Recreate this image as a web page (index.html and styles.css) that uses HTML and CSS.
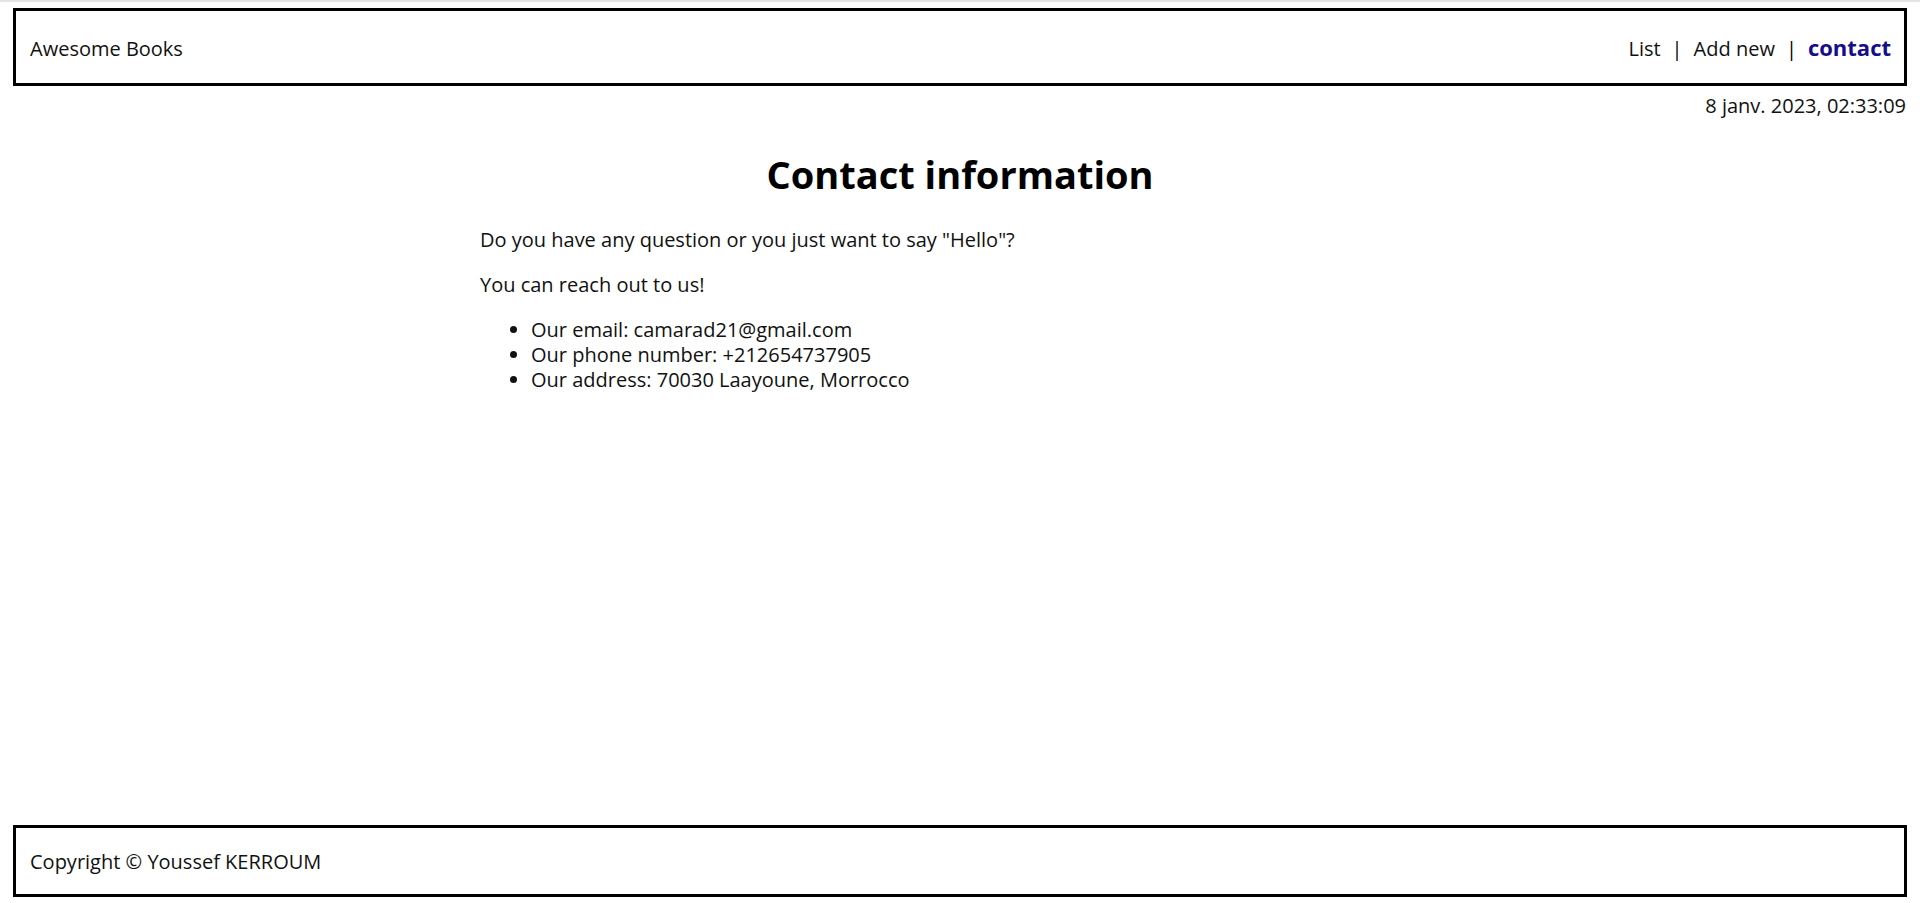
FILE: index.html
```html
<!DOCTYPE html>
<html lang="fr">
<head>
<meta charset="utf-8">
<title>Awesome Books</title>
<link rel="stylesheet" href="styles.css">
</head>
<body>
<div class="page">
  <header class="site-header">
    <span class="logo">Awesome Books</span>
    <nav class="nav">
      <a class="nav-link" href="#">List</a>
      <span class="sep">|</span>
      <a class="nav-link" href="#">Add new</a>
      <span class="sep">|</span>
      <a class="nav-link active" href="#">contact</a>
    </nav>
  </header>
  <div class="date">8 janv. 2023, 02:33:09</div>
  <main class="contact">
    <h1 class="title">Contact information</h1>
    <p class="para">Do you have any question or you just want to say "Hello"?</p>
    <p class="para">You can reach out to us!</p>
    <ul class="info-list">
      <li>Our email: camarad21@gmail.com</li>
      <li>Our phone number: +212654737905</li>
      <li>Our address: 70030 Laayoune, Morrocco</li>
    </ul>
  </main>
  <footer class="site-footer">Copyright © Youssef KERROUM</footer>
</div>
</body>
</html>
```
FILE: styles.css
```css
html, body {
  margin: 0;
  padding: 0;
  background: #fff;
}
body {
  font-family: "Open Sans", "Noto Sans", sans-serif;
  font-size: 20px;
  line-height: 25px;
  color: #111;
}
.page {
  min-height: 100vh;
  box-sizing: border-box;
  border-top: 2px solid #e4e4e4;
  display: flex;
  flex-direction: column;
  padding-bottom: 6px;
}
.site-header {
  margin: 6px 13px 0;
  border: 3px solid #000;
  padding: 24px 13px 22px 14px;
  display: flex;
  justify-content: space-between;
  align-items: baseline;
}
.logo {
  font-size: 20px;
}
.nav {
  display: flex;
  align-items: baseline;
  gap: 11px;
}
.nav-link {
  color: #111;
  text-decoration: none;
}
.nav-link.active {
  color: #150d8c;
  font-weight: 700;
  font-size: 22px;
}
.sep {
  color: #000;
}
.date {
  margin: 7px 14px 0;
  text-align: right;
}
.contact {
  width: 960px;
  margin: 33px auto 0;
}
.title {
  margin: 0 0 29px;
  text-align: center;
  font-size: 38px;
  line-height: 47px;
  font-weight: 700;
  color: #000;
}
.para {
  margin: 0 0 20px;
}
.info-list {
  margin: 0;
  padding-left: 51px;
}
.site-footer {
  margin: auto 13px 0;
  border: 3px solid #000;
  padding: 21px 14px 20px;
}
```
